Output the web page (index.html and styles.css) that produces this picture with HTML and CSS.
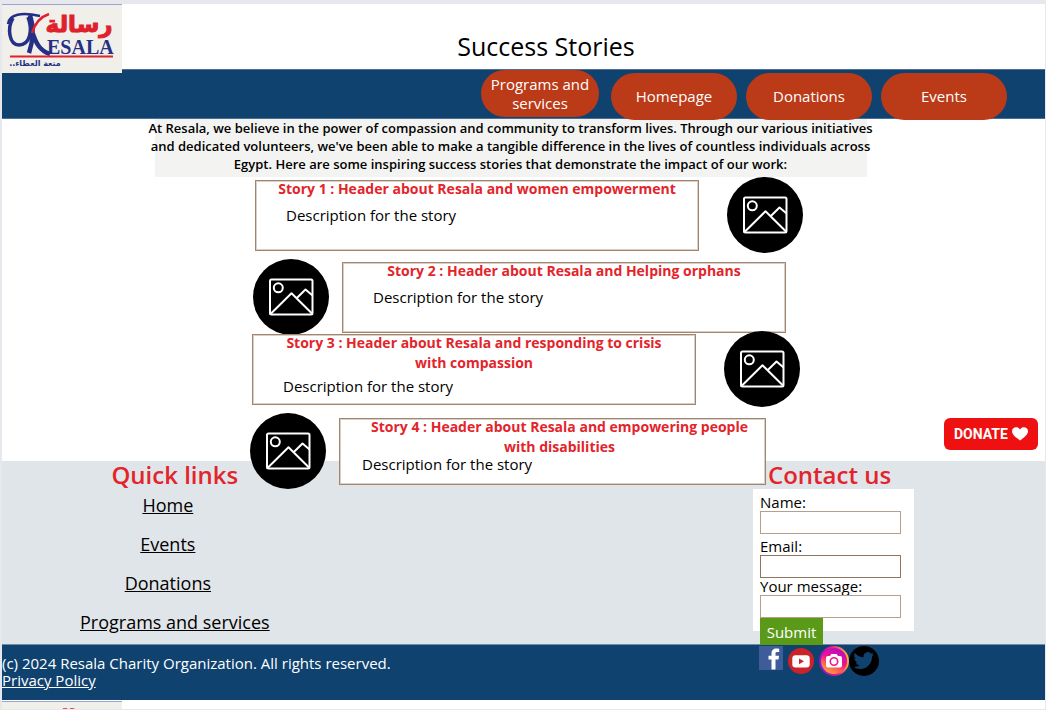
FILE: index.html
```html
<!DOCTYPE html>
<html lang="en">
<head>
<meta charset="utf-8">
<title>Success Stories - Resala</title>
<meta name="viewport" content="width=device-width, initial-scale=1">
<link rel="stylesheet" href="styles.css">
</head>
<body>
<svg class="sprite" aria-hidden="true">
  <symbol id="picture" viewBox="0 0 76 76">
    <circle cx="38" cy="38" r="38" fill="#000"/>
    <g fill="none" stroke="#fff" stroke-width="2" stroke-linejoin="round" stroke-linecap="round">
      <rect x="17" y="20.500" width="42.500" height="35" rx="1.500"/>
      <circle cx="25.300" cy="28.800" r="4.500"/>
      <path d="M17.500 55 38.500 34.300 59 54.500M43.600 39.300 52.500 30.500 59 36"/>
    </g>
  </symbol>
</svg>
<div class="page">
  <header class="header">
    <a class="logo" href="#" aria-label="Resala">
      <svg viewBox="0 0 120 68" width="120" height="68">
        <g fill="none" stroke="#262f86">
          <path d="M6 19C7 9 20 7 38 11" stroke-width="2.500"/>
          <path d="M11 13C5 23 7 40 17 40C28 40 31 25 26 12" stroke-width="3.500"/>
          <path d="M28 10C32 22 31 36 27 48" stroke-width="4.500"/>
          <path d="M31 29C34 38 38 46 48 49" stroke-width="4.500"/>
        </g>
        <path d="M30 28C33 18 38 12 47 9" fill="none" stroke="#e0202c" stroke-width="2.500"/>
        <text x="77" y="27" class="logo-arabic" text-anchor="middle" direction="rtl">رسالة</text>
        <text x="45" y="49" class="logo-latin">ESALA</text>
        <path d="M8 51.500H111" stroke="#e0202c" stroke-width="2"/>
        <text x="33" y="61" class="logo-tag" text-anchor="middle" direction="rtl">متعة العطاء..</text>
      </svg>
    </a>
    <h1 class="title">Success Stories</h1>
  </header>

  <nav class="nav" aria-label="Main">
    <a class="pill pill-narrow" href="#">Programs and services</a>
    <a class="pill" href="#">Homepage</a>
    <a class="pill" href="#">Donations</a>
    <a class="pill" href="#">Events</a>
  </nav>

  <main class="main">
    <div class="intro">
      <p class="intro-text">At Resala, we believe in the power of compassion and community to transform lives. Through our various initiatives and dedicated volunteers, we've been able to make a tangible difference in the lives of countless individuals across Egypt. Here are some inspiring success stories that demonstrate the impact of our work:</p>
    </div>

    <div class="stories">
      <article class="story">
        <div class="card">
          <h2 class="card-title">Story 1 : Header about Resala and women empowerment</h2>
          <p class="card-text">Description for the story</p>
        </div>
        <svg class="photo"><use href="#picture"/></svg>
      </article>
      <article class="story story-left">
        <svg class="photo"><use href="#picture"/></svg>
        <div class="card">
          <h2 class="card-title">Story 2 : Header about Resala and Helping orphans</h2>
          <p class="card-text">Description for the story</p>
        </div>
      </article>
      <article class="story story-tall">
        <div class="card">
          <h2 class="card-title">Story 3 : Header about Resala and responding to crisis with compassion</h2>
          <p class="card-text">Description for the story</p>
        </div>
        <svg class="photo"><use href="#picture"/></svg>
      </article>
      <article class="story story-left story-last">
        <svg class="photo"><use href="#picture"/></svg>
        <div class="card">
          <h2 class="card-title">Story 4 : Header about Resala and empowering people with disabilities</h2>
          <p class="card-text">Description for the story</p>
        </div>
      </article>
    </div>

    <button class="donate" type="button">DONATE
      <svg viewBox="0 0 16 14" width="16" height="14" aria-hidden="true"><path fill="#fff" d="M8 13.500C4 10.300 0 7.800 0 4.200C0 .200 5.500-1.300 8 2.400C10.500-1.300 16 .200 16 4.200C16 7.800 12 10.300 8 13.500Z"/></svg>
    </button>
  </main>

  <section class="lower">
    <div class="links">
      <h2 class="section-title">Quick links</h2>
      <ul class="link-list">
        <li><a href="#">Home</a></li>
        <li><a href="#">Events</a></li>
        <li><a href="#">Donations</a></li>
        <li class="link-wide"><a href="#">Programs and services</a></li>
      </ul>
    </div>
    <div class="contact">
      <h2 class="section-title">Contact us</h2>
      <form class="form">
        <div class="field field-name">
          <label for="name">Name:</label>
          <input id="name" type="text">
        </div>
        <div class="field field-email">
          <label for="email">Email:</label>
          <input id="email" type="email">
        </div>
        <div class="field">
          <label for="message">Your message:</label>
          <input id="message" type="text">
        </div>
        <button class="submit" type="submit">Submit</button>
      </form>
    </div>
  </section>

  <footer class="footer">
    <div class="legal">
      <p>(c) 2024 Resala Charity Organization. All rights reserved.</p>
      <a href="#">Privacy Policy</a>
    </div>
    <div class="social">
      <a href="#" aria-label="Facebook">
        <svg viewBox="0 0 24 24" width="24" height="24"><path fill="#3f5c9a" d="M0 0H24V24H0Z"/><path fill="#fff" d="M12.500 23.500V13.500H9.500V9.800H12.500V7.500C12.500 4 14.500 2.500 17.300 2.500C18.700 2.500 19.800 2.600 20.200 2.700V6H18.200C16.700 6 16.500 6.800 16.500 7.800V9.800H20L19.500 13.500H16.500V23.500Z"/></svg>
      </a>
      <a href="#" aria-label="YouTube">
        <svg viewBox="0 0 26 26" width="26" height="26"><circle cx="13" cy="13" r="13" fill="#cc2229"/><rect x="4.300" y="7.200" width="17.400" height="12.300" rx="3.200" fill="#fff"/><path fill="#cc2229" d="M11 10.500 16 13.300 11 16.200Z"/></svg>
      </a>
      <a href="#" aria-label="Instagram">
        <svg viewBox="0 0 30 30" width="30" height="30">
          <defs><linearGradient id="insta" x1="0.200" y1="1" x2="0.700" y2="0"><stop offset="0" stop-color="#ffb52e"/><stop offset=".3" stop-color="#ff6a4d"/><stop offset=".55" stop-color="#f5128a"/><stop offset="1" stop-color="#a511c9"/></linearGradient>
          <linearGradient id="rim" x1="0" y1="0.500" x2="1" y2="0.300"><stop offset="0" stop-color="#8a14d8"/><stop offset=".5" stop-color="#ee1894"/><stop offset="1" stop-color="#ffb52e"/></linearGradient></defs>
          <circle cx="15" cy="15" r="14" fill="url(#insta)" stroke="url(#rim)" stroke-width="2"/>
          <path fill="#fff" d="M9 10H11L12.300 8H17.700L19 10H21Q23 10 23 12V19.500Q23 21.500 21 21.500H9Q7 21.500 7 19.500V12Q7 10 9 10Z"/><circle cx="15" cy="15.500" r="3.700" fill="#fff" stroke="#f5128a" stroke-width="1.600"/>
        </svg>
      </a>
      <a href="#" aria-label="Twitter">
        <svg viewBox="0 0 30 30" width="30" height="30"><circle cx="15" cy="15" r="15" fill="#000"/><path transform="translate(4.500 4.200) scale(.86)" fill="#104270" d="M23.950 4.570a10 10 0 0 1-2.820.77 4.960 4.960 0 0 0 2.160-2.720 9.900 9.900 0 0 1-3.120 1.190 4.920 4.920 0 0 0-8.380 4.480A13.930 13.930 0 0 1 1.640 3.160a4.920 4.920 0 0 0 1.520 6.570 4.900 4.900 0 0 1-2.230-.61v.06a4.920 4.920 0 0 0 3.950 4.830 5 5 0 0 1-2.210.08 4.940 4.940 0 0 0 4.600 3.420A9.870 9.870 0 0 1 0 19.540a14 14 0 0 0 7.550 2.210c9.050 0 14-7.500 14-13.980 0-.21 0-.42-.02-.63a9.940 9.940 0 0 0 2.460-2.550z"/></svg>
      </a>
    </div>
  </footer>

  <div class="next-page">
    <svg viewBox="0 0 120 8" width="120" height="8" aria-hidden="true"><path fill="#e0202c" d="M61 7H66V8H61ZM69 7H74V8H69Z"/></svg>
  </div>
</div>
</body>
</html>
```
FILE: styles.css
```css
* { box-sizing: border-box; }

body {
  margin: 0;
  background: #e6e8ed;
  color: #000;
  font-family: "Open Sans", "Noto Sans", sans-serif;
  font-size: 15px;
  line-height: 18px;
}

h1, h2, p, ul { margin: 0; padding: 0; }

.sprite { position: absolute; width: 0; height: 0; }

.page {
  margin: 0 1px 0 2px;
  padding-top: 4px;
}

.header {
  display: grid;
  grid-template-columns: 120px 1fr 120px;
  height: 65px;
  background: #fff;
}

.logo {
  position: relative;
  z-index: 1;
  height: 69px;
  background: #f0efea;
  border-top: 1px solid #9da2d0;
}
.logo svg { display: block; }
.logo-arabic {
  fill: #e0202c;
  stroke: #e0202c;
  stroke-width: 1px;
  font: bold 23px "DejaVu Sans", sans-serif;
}
.logo-latin { fill: #262f86; font: bold 20px "Liberation Serif", serif; }
.logo-tag { fill: #262f86; font: bold 8px "DejaVu Sans", sans-serif; }

.title {
  align-self: end;
  padding: 0 0 11px 45px;
  font-size: 25px;
  font-weight: 400;
  line-height: 32px;
  text-align: center;
}

.nav {
  display: flex;
  justify-content: flex-end;
  align-items: flex-end;
  gap: 9px;
  height: 50px;
  padding-right: 38px;
  background: #104270;
  border: solid #4b6f95;
  border-width: 1px 0;
}
.pill {
  position: relative;
  z-index: 2;
  display: flex;
  align-items: center;
  justify-content: center;
  width: 126px;
  height: 47px;
  margin-bottom: -2px;
  border-radius: 24px;
  background: #bb3a17;
  color: #fff;
  line-height: 19px;
  text-align: center;
  text-decoration: none;
}
.pill-narrow { width: 118px; margin: 0 3px 1px 0; }

.main {
  position: relative;
  z-index: 1;
}
.main::before {
  content: "";
  position: absolute;
  z-index: -1;
  inset: 0 0 28px;
  background: #fff;
}

.intro {
  display: flex;
  justify-content: center;
  padding-right: 26px;
}
.intro-text {
  width: 740px;
  padding-bottom: 4px;
  background: linear-gradient(#f3f4f1, #f3f4f1) center / 712px 100% no-repeat;
  font-size: 13px;
  font-weight: 600;
  text-align: center;
}

.stories {
  display: grid;
  row-gap: 6px;
  width: 559px;
  margin: 0 auto;
  padding-left: 6px;
}
.story {
  display: flex;
  align-items: center;
  gap: 28px;
  padding-left: 5px;
}
.story-left { gap: 13px; padding-left: 3px; }
.story-tall { margin-top: -10px; padding-left: 2px; }
.story-last { padding-left: 0; }

.card {
  width: 444px;
  height: 71px;
  padding: 0 20px;
  background: #fff;
  border: 1px solid #a1866f;
  box-shadow: inset 0 0 0 1px #dacfc6;
}
.story-last .card { width: 427px; height: 67px; padding: 0 8px 0 22px; }
.card-title {
  margin-top: -2px;
  color: #e3242b;
  font-size: 14px;
  font-weight: 700;
  line-height: 20px;
  text-align: center;
}
.card-text { margin-top: 7px; padding-left: 10px; }
.story-tall .card-text { margin-top: 4px; }
.story-last .card-text { margin-top: -2px; padding-left: 0; }
.photo { flex: none; width: 76px; height: 76px; }

.donate {
  position: absolute;
  right: 7px;
  bottom: 39px;
  display: flex;
  align-items: center;
  justify-content: space-between;
  width: 94px;
  height: 32px;
  padding: 0 10px;
  border: 0;
  border-radius: 6px;
  background: #ef1111;
  color: #fff;
  font: bold 14px Roboto, sans-serif;
}

.lower {
  display: flex;
  justify-content: space-between;
  height: 183px;
  margin-top: -28px;
  padding: 0 131px 0 78px;
  background: #e0e5e9;
}
.section-title {
  color: #e3242b;
  font-size: 24px;
  font-weight: 600;
  line-height: 28px;
}
.links { text-align: center; }
.link-list {
  display: grid;
  gap: 15px;
  padding-top: 4px;
  list-style: none;
  font-size: 18px;
  line-height: 24px;
}
.link-list li { padding-right: 14px; }
.link-list .link-wide { padding-right: 0; }
.link-list a { color: #000; }

.contact { position: relative; z-index: 2; width: 161px; }
.contact .section-title { padding-left: 15px; white-space: nowrap; }
.form {
  height: 142px;
  padding: 5px 7px 0;
  background: #fff;
}
.field { display: grid; line-height: 17px; }
.field-name { margin-bottom: 4px; }
.field input {
  width: 141px;
  height: 23px;
  padding: 0 4px;
  border: 1px solid #b5a08f;
  background: #fff;
  font: inherit;
}
.field-email input { border-color: #8f7460; }
.submit {
  width: 63px;
  height: 27px;
  padding: 0;
  border: 0;
  background: #5a9a18;
  color: #fff;
  font: inherit;
}

.footer {
  display: flex;
  justify-content: space-between;
  height: 56px;
  padding-right: 166px;
  background: #104270;
  border-top: 1px solid #6f8ba8;
  color: #fff;
}
.legal { padding-top: 10px; line-height: 17px; }
.legal a { color: #fff; }
.social { display: flex; padding-top: 1px; }
.social a { display: block; margin-right: 5px; }
.social a:nth-child(2) { padding-top: 2px; }
.social a:nth-child(n+3) { margin-right: 0; }
.social svg { display: block; }

.next-page { padding-top: 1px; background: #fff; }
.next-page svg {
  display: block;
  background: #f0efea;
  border-top: 1px solid #9da2d0;
}
```
